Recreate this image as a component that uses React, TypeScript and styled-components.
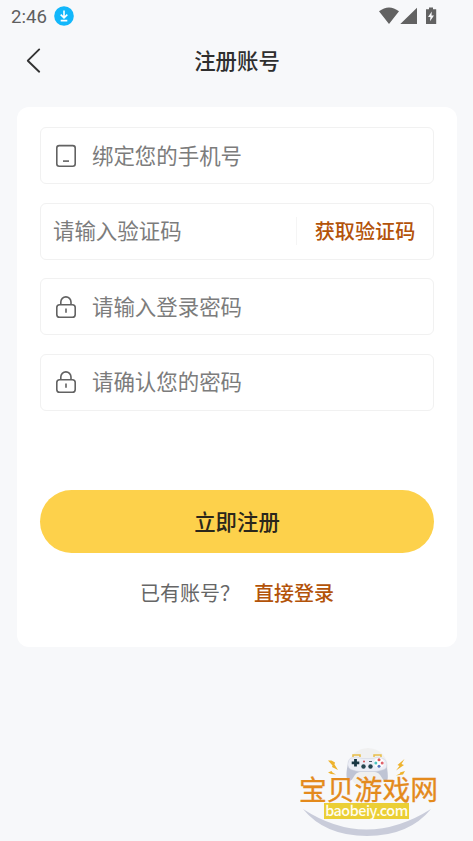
import React from "react";
import styled, { createGlobalStyle } from "styled-components";

const GlobalStyle = createGlobalStyle`
  * { box-sizing: border-box; }
  body {
    margin: 0;
    background: #f7f8fa;
    font-family: "Noto Sans CJK SC", sans-serif;
  }
`;

const Screen = styled.main`
  position: relative;
  display: flex;
  flex-direction: column;
  width: 100%;
  height: 841px;
  overflow: hidden;
  background: #f7f8fa;
`;

const StatusBar = styled.header`
  display: flex;
  align-items: center;
  height: 32px;
  padding: 0 36px 0 11px;
`;

const Clock = styled.span`
  font: 400 18.6px/32px Roboto, sans-serif;
  color: #5f5f5f;
  width: 43px;
  white-space: nowrap;
  padding-top: 1px;
`;

const StatusIcons = styled.svg`
  margin-left: auto;
`;

const NavBar = styled.nav`
  display: grid;
  grid-template-columns: 60px 1fr 60px;
  align-items: center;
  height: 58px;
`;

const BackButton = styled.button`
  display: flex;
  padding: 0 0 0 25px;
  border: 0;
  background: none;
`;

const Title = styled.h1`
  margin: 0;
  padding: 0 0 2px 1px;
  text-align: center;
  font-size: 21.4px;
  line-height: 30px;
  font-weight: 500;
  color: #2e2e2e;
`;

const Card = styled.form`
  display: flex;
  flex-direction: column;
  margin: 17px 16px 0 17px;
  height: 540px;
  padding: 20px 23px;
  border-radius: 12px;
  background: #fff;
`;

const Fields = styled.div`
  display: flex;
  flex-direction: column;
  gap: 18.6px;
`;

const Field = styled.label<{ $inset: number }>`
  display: flex;
  align-items: center;
  height: 57px;
  padding-left: ${(p) => p.$inset}px;
  border: 1px solid #f1f1f1;
  border-radius: 6px;
`;

const FieldIcon = styled.svg`
  flex: none;
  margin-right: 15px;
`;

const Placeholder = styled.span`
  flex: 1;
  padding-bottom: 2px;
  font-size: 21.45px;
  line-height: 32px;
  color: #7c7c7c;
  white-space: nowrap;
`;

const CodeButton = styled.button`
  width: 137px;
  height: 28px;
  padding: 0;
  border: 0;
  border-left: 1px solid #f5f5f5;
  background: none;
  font: 500 20.1px/28px "Noto Sans CJK SC", sans-serif;
  color: #b35309;
`;

const Submit = styled.button`
  height: 63px;
  margin-top: 79px;
  padding: 0 0 2px;
  border: 0;
  border-radius: 32px;
  background: #fdd14b;
  font: 500 21.4px/61px "Noto Sans CJK SC", sans-serif;
  color: #2a261b;
`;

const LoginRow = styled.p`
  display: flex;
  margin: 25px 0 0 100px;
  font-size: 20px;
  line-height: 30px;
  color: #666;
  white-space: nowrap;
`;

const LoginLink = styled.a`
  margin-left: 14px;
  font-weight: 500;
  color: #b35309;
`;

const Watermark = styled.aside`
  position: absolute;
  left: 290px;
  top: 740px;
  width: 160px;
  height: 101px;
`;

const WatermarkArt = styled.svg`
  position: absolute;
  inset: 0;
`;

const Brand = styled.div`
  position: absolute;
  left: 9px;
  top: 35px;
  font-size: 27.8px;
  line-height: 26px;
  color: #e48a1c;
  -webkit-text-stroke: 0.3px #e48a1c;
  white-space: nowrap;
`;

const Domain = styled.div`
  position: absolute;
  left: 34px;
  top: 63px;
  width: 85px;
  height: 16px;
  background: #ebcf35;
  color: #fffdf0;
  text-align: center;
  font: 500 14.4px/14px "Noto Sans CJK SC", sans-serif;
  letter-spacing: -0.5px;
  white-space: nowrap;
`;

const PhoneIcon = () => (
  <FieldIcon width="22" height="24" viewBox="0 0 22 24" fill="none" stroke="#626262" strokeWidth="1.6">
    <rect x="1.8" y="1.6" width="18.4" height="20.6" rx="2.4" />
    <path d="M8 17.1h6" />
  </FieldIcon>
);

const LockIcon = () => (
  <FieldIcon width="22" height="24" viewBox="0 0 22 24" fill="none" stroke="#626262" strokeWidth="1.6">
    <rect x="1.8" y="9.8" width="18.4" height="12.4" rx="2.8" />
    <path d="M5.8 9.8V7a5.1 5.1 0 0 1 10.2 0v2.8M11 13.6v4.2" />
  </FieldIcon>
);

const Bolts = () => (
  <g fill="#eeb32d">
    <path d="M38 20.5l4.500 5-.500 1.500 6 3-3.500-5.500.500-2-3.500-2zM38 32.500l3.500-1.500 1 1.500 3.500 2-5-.500z" />
    <path d="M114.500 19l-7 6 2 1-3.500 4.500 8-5.500-2.500-1zM115 31l-5 1.500v1l-4 2 7-1z" />
  </g>
);

const Controller = () => (
  <g>
    <path d="M63 17v-2h7v2M84 17v-2h7v2" fill="none" stroke="#e7bd48" strokeWidth="1.5" />
    <path d="M59 20C57 27 55 37 58 41q3 1 5-3 3-6 7-6h15q4 0 7 6 2 4 5 3c2-4 0-14-2-21z" fill="#bfc4d4" />
    <path d="M60 18.500q7-3 12 0h11q5-3 12 1c2 3 3 8-1 10-4 1-6 2-10 2H71c-4 0-6-1-10-2-4-2-4-7-1-11z" fill="#eceef6" stroke="#cfd2df" strokeWidth=".5" />
    <path d="M65.500 19v7.500M61.700 22.800h7.600" stroke="#183643" strokeWidth="2.800" />
    <circle cx="73.5" cy="26.500" r="2.200" fill="#254650" />
    <circle cx="80.5" cy="26.500" r="2.200" fill="#254650" />
    <circle cx="74" cy="21.5" r="1" fill="#cf4e50" />
    <path d="M79 21.5h3" stroke="#56636e" />
    <circle cx="89" cy="23" r="5" fill="#fff" />
    <circle cx="89" cy="19.800" r="1.5" fill="#de5a56" />
    <circle cx="89" cy="26.200" r="1.5" fill="#5677bd" />
    <circle cx="85.800" cy="23" r="1.5" fill="#4ac3c0" />
    <circle cx="92.200" cy="23" r="1.5" fill="#df626b" />
  </g>
);

export default function App() {
  return (
    <>
      <GlobalStyle />
      <Screen>
        <StatusBar>
          <Clock>2:46</Clock>
          <svg width="20" height="20" viewBox="0 0 20 20">
            <circle cx="10" cy="10" r="9.8" fill="#12b7fb" />
            <path d="M10 4.5v7M6.7 8.6L10 11.9l3.3-3.3M6.7 14.6h6.6" fill="none" stroke="#fff" strokeWidth="1.6" />
          </svg>
          <StatusIcons width="58" height="18" viewBox="0 0 58 18" fill="#626262">
            <path d="M0 4.2Q10 -3.4 20 4.2L10 17zM21.3 17L38 .7V17z" />
            <path d="M47 2.2h3V.4h4v1.8h3.2V17H47z" />
            <path d="M52.8 4.5L49 10.1h2.4l-.4 4.2 4-5.7h-2.5z" fill="#f7f8fa" />
          </StatusIcons>
        </StatusBar>
        <NavBar>
          <BackButton type="button" aria-label="返回">
            <svg width="17" height="26" viewBox="0 0 17 26">
              <path d="M14.2 1.4L2.8 12.7l11.4 11" fill="none" stroke="#333" strokeWidth="1.9" strokeLinejoin="round" strokeLinecap="round" />
            </svg>
          </BackButton>
          <Title>注册账号</Title>
        </NavBar>
        <Card>
          <Fields>
            <Field $inset={14}><PhoneIcon /><Placeholder>绑定您的手机号</Placeholder></Field>
            <Field $inset={12}>
              <Placeholder>请输入验证码</Placeholder>
              <CodeButton type="button">获取验证码</CodeButton>
            </Field>
            <Field $inset={14}><LockIcon /><Placeholder>请输入登录密码</Placeholder></Field>
            <Field $inset={14}><LockIcon /><Placeholder>请确认您的密码</Placeholder></Field>
          </Fields>
          <Submit type="button">立即注册</Submit>
          <LoginRow>{"已有账号\uFF1F"}<LoginLink>直接登录</LoginLink></LoginRow>
        </Card>
        <Watermark>
          <WatermarkArt width="160" height="101" viewBox="0 0 160 101">
            <circle cx="78" cy="28" r="20" fill="#f0f0f0" />
            <Bolts />
            <Controller />
            <path d="M13 69Q76 110 141 69Q119 96 77 96Q35 96 13 69z" fill="#c9ccda" />
          </WatermarkArt>
          <Brand>宝贝游戏网</Brand>
          <Domain>baobeiy.com</Domain>
        </Watermark>
      </Screen>
    </>
  );
}
